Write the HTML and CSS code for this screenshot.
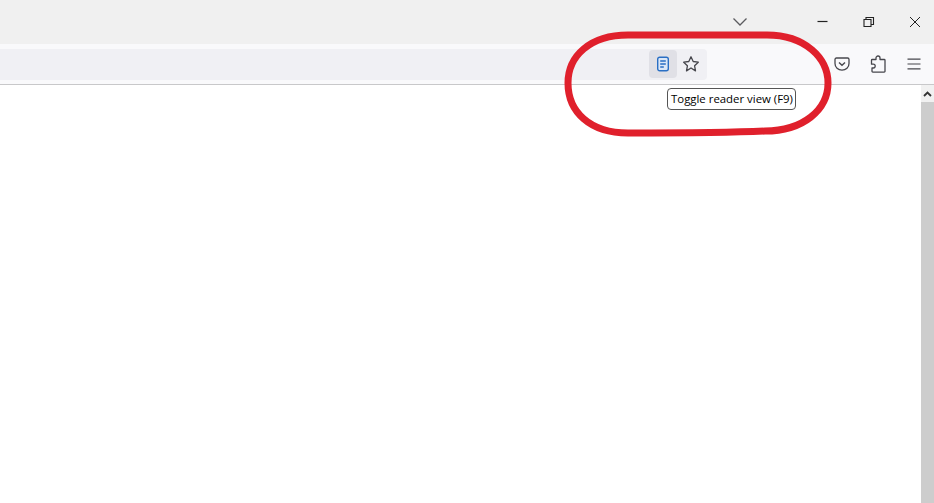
FILE: index.html
```html
<!DOCTYPE html>
<html lang="en">
<head>
<meta charset="utf-8">
<title>Toggle reader view</title>
<link rel="stylesheet" href="styles.css">
</head>
<body>
<div class="window">
  <header class="tabbar">
    <button class="tab-list" aria-label="List all tabs">
      <svg width="16" height="10" viewBox="0 0 16 10"><path d="M1.500 1.500 8 8l6.500-6.500" fill="none" stroke="#5b5b5f" stroke-width="1.300"/></svg>
    </button>
    <div class="caption">
      <button class="cap-btn" aria-label="Minimize"><svg width="12" height="12" viewBox="0 0 12 12"><path d="M.5 5.500h10" stroke="#222" stroke-width="1.200"/></svg></button>
      <button class="cap-btn" aria-label="Restore"><svg width="12" height="12" viewBox="0 0 12 12"><path d="M1 3.500h7v7H1zM3 3.500V1.500h7.500V8.500H8" fill="none" stroke="#222" stroke-width="1.100"/></svg></button>
      <button class="cap-btn" aria-label="Close"><svg width="12" height="12" viewBox="0 0 12 12"><path d="M1 1l10 10M11 1 1 11" stroke="#222" stroke-width="1"/></svg></button>
    </div>
  </header>
  <nav class="toolbar">
    <div class="urlbar">
      <button class="url-btn active" aria-label="Toggle reader view">
        <svg width="14" height="16" viewBox="0 0 14 16"><rect x="1.700" y="1.200" width="10.600" height="13.600" rx="2" fill="#dbe7f7" stroke="#2a6fc4" stroke-width="1.400"/><path d="M4.200 5h5.600M4.200 8h5.600M4.200 11h3.600" stroke="#2a6fc4" stroke-width="1.300"/></svg>
      </button>
      <button class="url-btn" aria-label="Bookmark this page">
        <svg width="18" height="18" viewBox="0 0 18 18"><path d="M9 1.800l2.200 4.700 5.100.7-3.700 3.600.9 5.100L9 13l-4.500 2.900.9-5.100-3.700-3.600 5.100-.7z" fill="none" stroke="#47474d" stroke-width="1.300" stroke-linejoin="round"/></svg>
      </button>
    </div>
    <div class="tools">
      <button class="tool" aria-label="Save to Pocket">
        <svg width="16" height="16" viewBox="0 0 16 16"><path d="M2.400 2h11.200c.8 0 1.400.6 1.400 1.400v4.100A7 6.600 0 0 1 8 14.200 7 6.600 0 0 1 1 7.500V3.400C1 2.600 1.600 2 2.400 2z" fill="none" stroke="#47474d" stroke-width="1.300"/><path d="M5 6.500 8 9.300l3-2.800" fill="none" stroke="#47474d" stroke-width="1.400"/></svg>
      </button>
      <button class="tool" aria-label="Extensions">
        <svg width="16" height="18" viewBox="0 0 16 18"><path d="M6 3.500V3a2 2 0 0 1 4 0v1.500h4.200a.8.800 0 0 1 .8.800v11a.8.800 0 0 1-.8.800H2.800a.8.800 0 0 1-.8-.800V13h1.300a1.900 1.900 0 0 0 0-3.800H1.500V5.300c0-.5.3-.8.800-.8H6z" fill="none" stroke="#47474d" stroke-width="1.300" stroke-linejoin="round"/></svg>
      </button>
      <button class="tool" aria-label="Open application menu">
        <svg width="14" height="12" viewBox="0 0 14 12"><path d="M.5 1.200h13M.5 6h13M.5 10.800h13" stroke="#47474d" stroke-width="1.200"/></svg>
      </button>
    </div>
  </nav>
  <div class="content">
    <main class="page"></main>
    <div class="scrollbar">
      <div class="scroll-up"><svg width="9" height="6" viewBox="0 0 9 6"><path d="M1 5l3.500-3.500L8 5" fill="none" stroke="#333" stroke-width="1.800"/></svg></div>
      <div class="scroll-track"></div>
    </div>
  </div>
  <div class="tooltip">Toggle reader view (F9)</div>
  <svg class="annotation" width="934" height="503" viewBox="0 0 934 503" aria-hidden="true">
    <path d="M628 35H767C805 35 828 58 828 83 828 110 803 131 765 131 725 133 670 133 628 133 590 133 568 112 568 83 568 56 590 35 628 35z" fill="none" stroke="#e0202c" stroke-width="7"/>
  </svg>
</div>
</body>
</html>
```
FILE: styles.css
```css
* { box-sizing: border-box; }
html, body { margin: 0; height: 100%; overflow: hidden; background: #fff; }
button { border: 0; padding: 0; margin: 0; background: none; display: flex; align-items: center; justify-content: center; }
svg { display: block; }

.window { position: relative; height: 503px; overflow: hidden; display: flex; flex-direction: column; font-family: "Liberation Sans", Arial, sans-serif; }

.tabbar { height: 44px; background: #f0f0f0; display: flex; justify-content: flex-end; align-items: center; flex: none; }
.tab-list { width: 28px; height: 28px; margin-right: 46px; }
.caption { display: flex; margin-right: -4px; }
.cap-btn { width: 46px; height: 44px; flex: none; }

.toolbar { height: 41px; flex: none; background: #f9f9fb; border-bottom: 1px solid #c8c8ca; display: flex; align-items: flex-start; padding-top: 5px; }
.urlbar { width: 707px; height: 31px; background: #f0f0f4; border-radius: 0 4px 4px 0; display: flex; justify-content: flex-end; flex: none; padding: 1px 2px 1px 0; }
.url-btn { width: 28px; height: 28px; border-radius: 4px; }
.url-btn.active { background: #e0e0e6; }

.tools { flex: 1; display: flex; justify-content: flex-end; padding-right: 6px; padding-top: 1px; gap: 8px; }
.tool { width: 28px; height: 28px; }

.content { flex: 1; display: flex; min-height: 0; }
.page { flex: 1; background: #fff; }
.scrollbar { width: 13px; display: flex; flex-direction: column; }
.scroll-up { height: 17px; background: #f1f1f1; display: flex; align-items: center; justify-content: center; }
.scroll-track { flex: 1; background: #cdcdcd; }

.tooltip { position: absolute; left: 667px; top: 88px; height: 22px; width: 129px; border: 1px solid #555; border-radius: 4px; background: #fff; color: #000; font-size: 11.4px; line-height: 20px; padding-left: 3px; white-space: nowrap; font-family: "Open Sans", "Liberation Sans", sans-serif; }

.annotation { position: absolute; left: 0; top: 0; pointer-events: none; }
```
